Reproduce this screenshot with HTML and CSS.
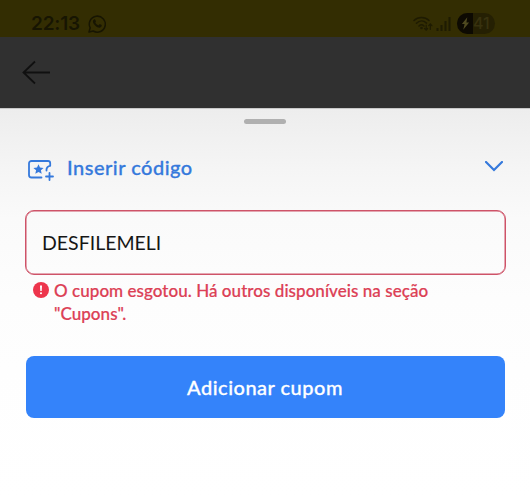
FILE: index.html
```html
<!DOCTYPE html>
<html lang="pt-BR">
<head>
<meta charset="utf-8">
<title>Inserir código</title>
<link rel="stylesheet" href="styles.css">
</head>
<body>
<div class="status">
  <span class="time">22:13</span>
  <svg class="whatsapp" viewBox="0 0 18 18"><path d="M1 17l1.200-4.200A8 8 0 1 1 5.200 16z" fill="none" stroke="currentColor" stroke-width="1.500" stroke-linejoin="round"/><path d="M5.700 4.800c.8-.7 1.400-.5 1.700.2l.5 1.300c.1.5-.2.9-.6 1.300.7 1.400 1.700 2.300 3 2.800l.9-1c.3-.3.6-.3 1-.1l1.500.8c.2 1.300-.6 2.400-2 2.600C8.600 12.600 5 9 4.900 6.400c0-.7.3-1.200.8-1.600z" fill="currentColor"/></svg>
  <svg class="wifi" viewBox="0 0 20 16"><g fill="none" stroke="currentColor" stroke-width="1.500" stroke-linecap="round"><path d="M1 4.500C5 .5 12 .5 16 4.500M3.500 7.300c3-3 7-3 10-.2M6 10c1.600-1.500 3.500-1.500 5 0"/><path d="M13.200 9v5M11.500 12.500l1.700 1.700 1.400-1.700M17.300 13.500V8M15.700 9.700L17.300 8l1.600 1.700" stroke-width="1.200"/></g><circle cx="8.500" cy="12" r="1.300" fill="currentColor"/></svg>
  <svg class="signal" viewBox="0 0 15 15"><path d="M1.500 15v-3M5.500 15V9M9.500 15V5M13.500 15V1" stroke="currentColor" stroke-width="2"/></svg>
  <div class="battery">
    <span class="charge"><svg viewBox="0 0 10 14"><path d="M7 0L1 7.500h3L2.500 14 9 6H6z" fill="#4f4a20"/></svg></span><span>41</span>
  </div>
</div>
<div class="header">
  <svg class="back" viewBox="0 0 29 25"><path d="M28 12.500H1.500M13 1.500L1.500 12.500 13 23.500" fill="none" stroke="#101010" stroke-width="1.800"/></svg>
</div>
<main class="sheet">
  <div class="handle"></div>
  <div class="toggle">
    <svg class="coupon" viewBox="0 0 26 21"><g fill="none" stroke="currentColor" stroke-width="1.800" stroke-linecap="round" stroke-linejoin="round"><path d="M13.500 17.500H3.500A2.500 2.500 0 0 1 1 15V3.500A2.500 2.500 0 0 1 3.500 1H20a2.200 2.200 0 0 1 2.200 2.200v2.600a3.800 3.800 0 0 0-3.700 4v.7"/><path d="M21.500 13v7M18 16.500h7"/></g><path d="M10.500 4.200l1.500 3.300 3.600.4-2.700 2.400.8 3.500-3.200-1.800-3.200 1.800.8-3.500-2.700-2.400 3.600-.4z" fill="currentColor"/></svg>
    <span class="label">Inserir código</span>
    <svg class="chevron" viewBox="0 0 18 11"><path d="M1 1l8 8 8-8" fill="none" stroke="currentColor" stroke-width="2.200" stroke-linecap="round"/></svg>
  </div>
  <input class="code" value="DESFILEMELI" aria-label="Código" spellcheck="false">
  <div class="error">
    <svg viewBox="0 0 16 16"><circle cx="8" cy="8" r="8" fill="#ed354c"/><path d="M7 3.600h2l-.3 5.300H7.300z" fill="#fff"/><circle cx="8" cy="11.200" r="1.050" fill="#fff"/></svg>
    <p><span class="line1">O cupom esgotou. Há outros disponíveis na seção</span><br><span class="line2">"Cupons".</span></p>
  </div>
  <button class="submit">Adicionar cupom</button>
</main>
</body>
</html>
```
FILE: styles.css
```css
* { box-sizing: border-box; }
body {
  margin: 0;
  height: 500px;
  overflow: hidden;
  background: #303030;
  font-family: Lato, "Liberation Sans", sans-serif;
}
svg { display: block; flex: none; }
.status {
  display: flex;
  align-items: center;
  height: 37px;
  padding: 10px 35px 0 31px;
  background: #332d02;
  color: #171502;
}
.time { width: 48px; font: 600 19px/26px Inter, sans-serif; letter-spacing: -.2px; }
.whatsapp { width: 18px; height: 18px; margin-left: 9px; }
.wifi { width: 20px; height: 16px; margin-left: auto; opacity: .75; }
.signal { width: 15px; height: 15px; margin: 0 6px 0 3px; opacity: .75; }
.battery {
  display: flex;
  align-items: center;
  width: 38px;
  height: 21px;
  border-radius: 11px;
  overflow: hidden;
  background: #252003;
  color: #38320f;
  font: 500 16px/21px Inter, sans-serif;
}
.charge { display: flex; align-items: center; justify-content: center; width: 16px; height: 21px; background: #0d0a02; }
.charge svg { width: 9px; height: 13px; }
.header { height: 71px; padding: 23px 0 0 22px; background: #303030; }
.back { width: 29px; height: 25px; }
.sheet {
  height: 392px;
  padding: 10px 25px 0;
  border-top: 1px solid #c8c8c8;
  background: linear-gradient(#ededed, #f5f5f5 60px, #fafafa 110px, #fdfdfd 190px, #fefefe 260px, #fff);
}
.handle { width: 42px; height: 5px; margin: 0 auto; border-radius: 3px; background: #b0b0b0; }
.toggle { display: flex; align-items: center; height: 86px; padding: 2px 2px 0 3px; color: #3579dc; }
.coupon { width: 26px; height: 21px; margin-top: 4px; }
.label {
  margin: -2px 0 0 13px;
  font-size: 20px;
  font-weight: 500;
  letter-spacing: .5px;
  -webkit-text-stroke: .3px currentColor;
}
.chevron { width: 18px; height: 11px; margin: -3px 0 0 auto; }
.code {
  display: block;
  width: 481px;
  height: 65px;
  padding: 0 16px;
  border: 1px solid #ce5368;
  border-radius: 9px;
  outline: 0;
  background: transparent;
  box-shadow: inset 0 0 0 .5px #ce5368;
  color: #161616;
  font: 400 19.500px Lato, sans-serif;
}
.error { display: flex; gap: 5px; padding: 7px 0 0 8px; color: #dc4055; }
.error svg { width: 16px; height: 16px; }
.error p {
  margin: -3px 0 0;
  font-size: 17px;
  font-weight: 500;
  line-height: 23px;
  letter-spacing: .05px;
  white-space: nowrap;
  -webkit-text-stroke: .2px currentColor;
}
.submit {
  display: block;
  width: 479px;
  height: 62px;
  margin: 31px 0 0 1px;
  padding: 0 1px 1px 0;
  border: 0;
  border-radius: 8px;
  background: #3483fa;
  color: #fff;
  font: 500 20px Lato, sans-serif;
  letter-spacing: .5px;
  -webkit-text-stroke: .3px currentColor;
}
```
